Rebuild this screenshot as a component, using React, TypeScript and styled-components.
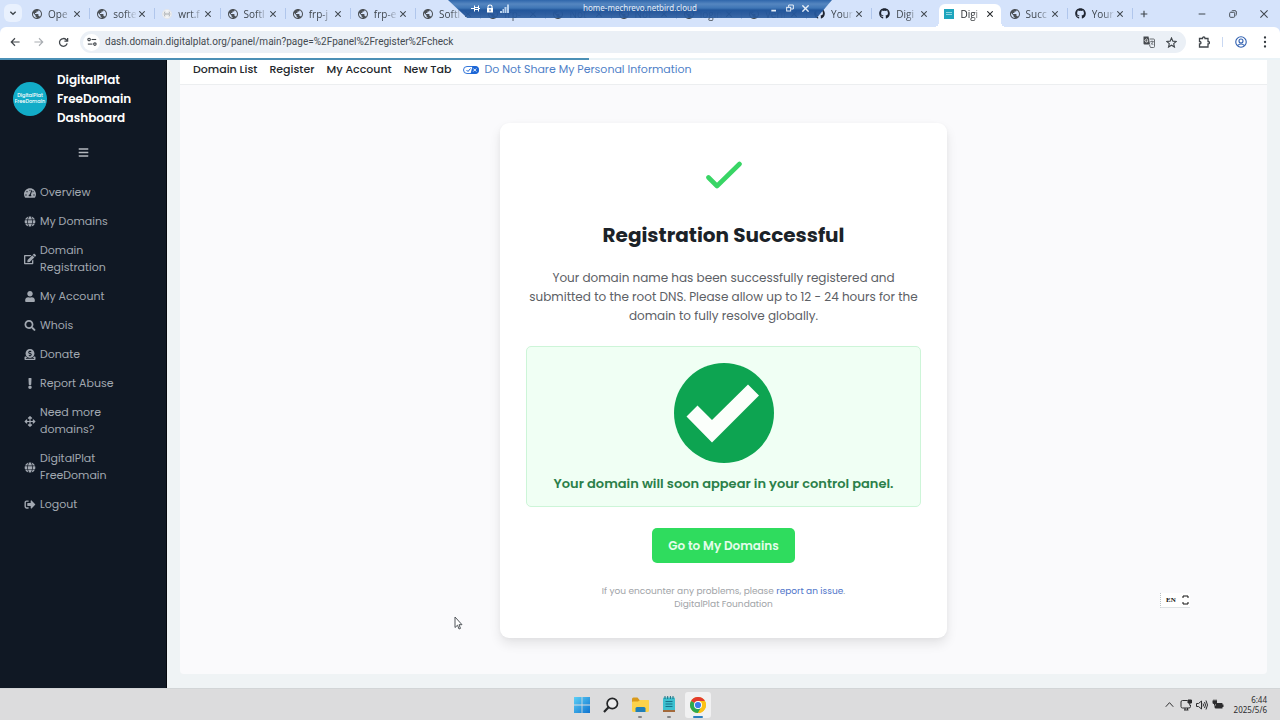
import React from "react";
import styled, { createGlobalStyle, css } from "styled-components";
import {
  FaArrowsAlt,
  FaBars,
  FaDonate,
  FaEdit,
  FaExclamation,
  FaGithub,
  FaGlobe,
  FaSearch,
  FaSignOutAlt,
  FaTachometerAlt,
  FaUser,
} from "react-icons/fa";

const uiFont = `"Poppins", "Inter", sans-serif`;
const chromeFont = `"Segoe UI", "Open Sans", "Noto Sans", sans-serif`;

const GlobalStyle = createGlobalStyle`
  *, *::before, *::after { box-sizing: border-box; }
  body { margin: 0; font-family: ${uiFont}; background: #eff3f5; }
  h1, p, ul { margin: 0; padding: 0; }
  button { border: 0; padding: 0; background: none; font: inherit; color: inherit; }
  a { text-decoration: none; color: inherit; }
  svg { display: block; flex: none; }
`;

const Screen = styled.div`
  position: relative;
  display: flex;
  flex-direction: column;
  min-height: 100vh;
  overflow: hidden;
`;

/* ---------- Browser tabs ---------- */

const TabStrip = styled.div`
  display: flex;
  align-items: stretch;
  height: 27px;
  background: #d5e3fb;
  font-family: ${chromeFont};
  color: #3f464d;
`;

const TabSearch = styled.button`
  display: grid;
  place-items: center;
  width: 18px;
  height: 18px;
  margin: 4px 3px 0 4px;
  border-radius: 6px;
  background: #e9f1fe;
`;

const Tabs = styled.div`
  display: flex;
  flex: 1;
  min-width: 0;
`;

const Tab = styled.div<{ $active?: boolean; $divider?: boolean }>`
  position: relative;
  display: flex;
  align-items: center;
  flex: 1 1 0;
  min-width: 0;
  padding: 0 7px;
  ${(p) =>
    p.$divider &&
    css`
      background: linear-gradient(#b0c6ec, #b0c6ec) right 8px / 1px 11px no-repeat;
    `}
  ${(p) =>
    p.$active &&
    css`
      margin: 4px 2px 0;
      padding: 0 5px 4px;
      border-radius: 6px 6px 0 0;
      background: #fff;
      color: #1f2327;
      &::before,
      &::after {
        content: "";
        position: absolute;
        bottom: 0;
        width: 5px;
        height: 5px;
      }
      &::before {
        left: -5px;
        background: radial-gradient(circle at 0 0, transparent 5px, #fff 5px);
      }
      &::after {
        right: -5px;
        background: radial-gradient(circle at 100% 0, transparent 5px, #fff 5px);
      }
    `}
`;

const TabLabel = styled.span`
  flex: 1;
  min-width: 0;
  margin-left: 6px;
  white-space: nowrap;
  font-size: 10px;
  line-height: 14px;
  mask-image: linear-gradient(90deg, #000 50%, transparent 105%);
`;

const TabClose = styled.button`
  display: grid;
  place-items: center;
  width: 12px;
  height: 12px;
`;

const SiteBadge = styled.span`
  display: grid;
  align-content: center;
  gap: 1px;
  width: 10px;
  height: 10px;
  padding: 0 2px;
  background: #1fa5bd;
  &::before,
  &::after {
    content: "";
    height: 1px;
    background: #8fd6e2;
  }
`;

const StripControls = styled.div`
  display: flex;
  align-items: center;
  justify-content: space-between;
  width: 147px;
  padding: 0 10px 0 5px;
`;

const WindowButtons = styled.div`
  display: flex;
  gap: 19px;
`;

const IconButton = styled.button`
  display: grid;
  place-items: center;
  width: 12px;
  height: 14px;
`;

/* ---------- Browser toolbar ---------- */

const ToolbarBack = styled.div`
  background: #d5e3fb;
`;

const Toolbar = styled.div`
  display: flex;
  align-items: center;
  height: 31px;
  padding: 0 9px 1px;
  border-radius: 6px 6px 0 0;
  background: #fff;
  color: #41464b;
`;

const NavButtons = styled.div`
  display: flex;
  gap: 12px;
  margin-right: 11px;
`;

const AddressBar = styled.div`
  display: flex;
  align-items: center;
  flex: 1;
  height: 22px;
  padding: 0 9px 0 3px;
  border-radius: 11px;
  background: #ebf0f6;
`;

const SiteInfo = styled.button`
  display: grid;
  place-items: center;
  width: 17px;
  height: 17px;
  border-radius: 50%;
  background: #fff;
`;

const AddressInput = styled.input`
  flex: 1;
  min-width: 0;
  padding: 0;
  margin: 0 5px;
  border: 0;
  outline: 0;
  background: none;
  font: 10px/16px "Segoe UI", Roboto, sans-serif;
  color: #444a50;
`;

const AddressIcons = styled.div`
  display: flex;
  gap: 10px;
`;

const ToolbarEnd = styled.div`
  display: flex;
  align-items: center;
  gap: 12px;
  margin-left: 12px;
`;

const Divider = styled.span`
  width: 1px;
  height: 10px;
  background: #c9d8f2;
`;

const LoadTrack = styled.div`
  height: 2px;
  background: #eaf3f7;
`;

const LoadBar = styled.div`
  width: 46%;
  height: 2px;
  background: #4b90b6;
`;

/* ---------- Remote session bar ---------- */

const RemoteBar = styled.div`
  position: absolute;
  top: 0;
  left: 50%;
  display: flex;
  align-items: flex-start;
  justify-content: space-between;
  width: 384px;
  height: 18px;
  padding: 2px 23px 0;
  transform: translateX(-50%);
  clip-path: polygon(0 0, 100% 0, 96% 100%, 5% 100%);
  background: linear-gradient(#2f66ab 0, #5586c0 4px, #3f76b6 8px, #23579c 10px, #24559af0 14px, #2a5c9fe6 18px);
  font: 8px/12px "Noto Sans", sans-serif;
  color: #e6eef8;
`;

const RemoteIcons = styled.div<{ $gap: number; $end?: boolean }>`
  display: flex;
  align-items: center;
  justify-content: ${(p) => (p.$end ? "flex-end" : "flex-start")};
  gap: ${(p) => p.$gap}px;
  width: 56px;
  height: 12px;
`;

/* ---------- Dashboard ---------- */

const Dashboard = styled.div`
  display: flex;
  flex: 1;
  background: #eff3f5;
`;

const Sidebar = styled.aside`
  width: 167px;
  flex: none;
  background: #101824;
  border-right: 1px solid #05080e;
`;

const Brand = styled.a`
  display: flex;
  align-items: center;
  gap: 10px;
  padding: 10px 13px 0;
  font-size: 12px;
  line-height: 19px;
  font-weight: 600;
  color: #fff;
`;

const BrandMark = styled.span`
  display: grid;
  align-content: center;
  flex: none;
  width: 34px;
  height: 34px;
  border-radius: 50%;
  background: #12acc8;
  text-align: center;
  font-size: 5px;
  line-height: 6px;
  font-weight: 500;
`;

const MenuToggle = styled.button`
  display: block;
  margin: 20px auto 0;
  color: #b4b8be;
`;

const SideList = styled.ul`
  display: grid;
  gap: 12px;
  margin-top: 26px;
  list-style: none;
`;

const SideLink = styled.a`
  display: flex;
  align-items: center;
  gap: 4px;
  padding-left: 24px;
  font-size: 11px;
  line-height: 17px;
  color: #a2a8b1;
  svg {
    width: 12px;
  }
`;

const Content = styled.main`
  display: flex;
  flex: 1;
  min-width: 0;
  padding: 0 13px 14px;
`;

const Panel = styled.div`
  display: flex;
  flex: 1;
  flex-direction: column;
  border-radius: 0 0 4px 4px;
  background: #fafafc;
`;

const TopNav = styled.nav`
  display: flex;
  gap: 12px;
  height: 25px;
  padding: 0 13px;
  border-bottom: 1px solid #eceef0;
  background: #fff;
  font-size: 11px;
  line-height: 19px;
  font-weight: 500;
  color: #23272b;
`;

const PrivacyLink = styled.a`
  display: flex;
  align-items: center;
  gap: 5px;
  height: 19px;
  font-weight: 400;
  color: #4f7fc8;
`;

const Card = styled.section`
  width: 447px;
  margin: 38px auto 0;
  padding: 38px 26px 27px;
  border-radius: 9px;
  background: #fff;
  box-shadow: 0 6px 12px rgba(0, 0, 0, 0.09), 0 1px 4px rgba(0, 0, 0, 0.03);
  text-align: center;
  svg {
    margin: 0 auto;
  }
`;

const Title = styled.h1`
  margin: 30px 0 18px;
  font-size: 20px;
  line-height: 30px;
  font-weight: 700;
  color: #1b2228;
`;

const Message = styled.p`
  font-size: 12px;
  line-height: 19px;
  white-space: nowrap;
  color: #5c6065;
`;

const Notice = styled.div`
  margin: 21px 0;
  padding: 16px 0 12px;
  border: 1px solid #cdf5d8;
  border-radius: 5px;
  background: #f0fff4;
`;

const NoticeText = styled.p`
  margin-top: 11px;
  font-size: 13px;
  line-height: 20px;
  font-weight: 600;
  white-space: nowrap;
  color: #2b8049;
`;

const PrimaryButton = styled.button`
  height: 35px;
  padding: 0 16px;
  border-radius: 5px;
  background: #2fdc5e;
  font-size: 12px;
  font-weight: 600;
  color: #e4fdeb;
`;

const Help = styled.p`
  margin-top: 22px;
  font-size: 9px;
  line-height: 13px;
  color: #a1a4a8;
  a {
    color: #4e74c9;
  }
`;

/* ---------- Desktop overlays and taskbar ---------- */

const Cursor = styled.svg`
  position: absolute;
  left: 454px;
  top: 616px;
`;

const InputBadge = styled.div`
  position: absolute;
  right: 90px;
  bottom: 112px;
  display: flex;
  align-items: center;
  justify-content: space-between;
  width: 30px;
  height: 15px;
  padding: 0 1px 0 5px;
  border-left: 1px dotted #b9c0c4;
  border-bottom: 1px solid #dfe3e5;
  background: #fff;
  font: 700 7px/12px "Liberation Serif", serif;
  color: #111;
`;

const Taskbar = styled.footer`
  display: grid;
  grid-template-columns: 1fr auto 1fr;
  align-items: center;
  height: 32px;
  padding: 0 13px;
  border-top: 1px solid #d2d5d7;
  background: #dcdcdd;
`;

const Apps = styled.div`
  display: flex;
  grid-column: 2;
  gap: 3px;
`;

const AppButton = styled.button<{ $state?: "open" | "active" }>`
  position: relative;
  display: grid;
  place-items: center;
  width: 26px;
  height: 26px;
  border-radius: 3px;
  background: ${(p) => (p.$state === "active" ? "#f1f1f2" : "none")};
  &::after {
    content: "";
    position: absolute;
    bottom: 0;
    left: 50%;
    width: ${(p) => (p.$state === "active" ? 10 : 4)}px;
    height: 2px;
    border-radius: 1px;
    transform: translateX(-50%);
    background: ${(p) => (p.$state === "active" ? "#2b7fc0" : p.$state ? "#858688" : "none")};
  }
`;

const Tray = styled.div`
  display: flex;
  align-items: center;
  justify-self: end;
  grid-column: 3;
  gap: 4px;
  color: #2c2c2e;
`;

const Clock = styled.time`
  margin-left: 6px;
  text-align: right;
  font: 8px/10px "Noto Sans", sans-serif;
`;

/* ---------- Drawings ---------- */

type LineProps = { size?: number; children: React.ReactNode; box?: string; width?: number; sw?: number };

const Line = ({ size = 12, width, box = "0 0 24 24", sw = 2, children }: LineProps) => (
  <svg
    width={width ?? size}
    height={size}
    viewBox={box}
    fill="none"
    stroke="currentColor"
    strokeWidth={sw}
    aria-hidden
  >
    {children}
  </svg>
);

const CloseGlyph = ({ size = 6, sw = 3.4 }: { size?: number; sw?: number }) => (
  <Line size={size} box="2 2 20 20" sw={sw}>
    <path d="M3 3l18 18M21 3L3 21" />
  </Line>
);

const WorldGlyph = () => (
  <svg width="10" height="10" viewBox="2 2 20 20" fill="#4c5156" aria-hidden>
    <path d="M12 2C6.480 2 2 6.480 2 12s4.480 10 10 10 10-4.480 10-10S17.520 2 12 2zm-1 17.930c-3.950-.490-7-3.850-7-7.930 0-.620.080-1.210.210-1.790L9 15v1c0 1.100.900 2 2 2v1.930zm6.900-2.540c-.260-.810-1-1.390-1.900-1.390h-1v-3c0-.550-.450-1-1-1H8v-2h2c.550 0 1-.450 1-1V7h2c1.100 0 2-.900 2-2v-.410c2.930 1.190 5 4.060 5 7.410 0 2.080-.800 3.970-2.100 5.390z" />
  </svg>
);

const SignalGlyph = () => (
  <Line size={10} sw={2}>
    <circle cx="12" cy="12" r="11" fill="#f2f3f4" stroke="#e3e5e8" />
    <g stroke="#a5a9ae">
      <path d="M7 6q-4 6 0 12M17 6q4 6 0 12M9.500 9q-1.500 3 0 6M14.500 9q1.500 3 0 6" />
      <path d="M10 12h4" />
    </g>
  </Line>
);

const RestoreGlyph = ({ size = 8 }: { size?: number }) => (
  <Line size={size} sw={2.8}>
    <rect x="2" y="7" width="15" height="15" rx="3" />
    <path d="M7 4q1-2 4-2h7q4 0 4 4v7q0 3-2 4" />
  </Line>
);

const faviconFor = (kind: string) => {
  if (kind === "github") return <FaGithub size={11} color="#1e2430" />;
  if (kind === "signal") return <SignalGlyph />;
  if (kind === "plat") return <SiteBadge />;
  return <WorldGlyph />;
};

const tabs: { label: string; kind: string; active?: boolean }[] = [
  { label: "Ope", kind: "world" },
  { label: "softe", kind: "world" },
  { label: "wrt.f", kind: "signal" },
  { label: "Softl", kind: "world" },
  { label: "frp-j", kind: "world" },
  { label: "frp-e", kind: "world" },
  { label: "Softl", kind: "world" },
  { label: "frp-", kind: "world" },
  { label: "Not", kind: "world" },
  { label: "Not", kind: "world" },
  { label: "login", kind: "world" },
  { label: "Verif", kind: "world" },
  { label: "Your", kind: "github" },
  { label: "Digi", kind: "github" },
  { label: "Digi", kind: "plat", active: true },
  { label: "Succ", kind: "world" },
  { label: "Your", kind: "github" },
];

const sideItems: { icon: React.ReactNode; label: React.ReactNode; key: string }[] = [
  { key: "overview", icon: <FaTachometerAlt size={12} />, label: "Overview" },
  { key: "domains", icon: <FaGlobe size={11} />, label: "My Domains" },
  { key: "register", icon: <FaEdit size={12} />, label: <>Domain<br />Registration</> },
  { key: "account", icon: <FaUser size={11} />, label: "My Account" },
  { key: "whois", icon: <FaSearch size={11} />, label: "Whois" },
  { key: "donate", icon: <FaDonate size={11} />, label: "Donate" },
  { key: "abuse", icon: <FaExclamation size={11} />, label: "Report Abuse" },
  { key: "more", icon: <FaArrowsAlt size={11} />, label: <>Need more<br />domains?</> },
  { key: "free", icon: <FaGlobe size={11} />, label: <>DigitalPlat<br />FreeDomain</> },
  { key: "logout", icon: <FaSignOutAlt size={11} />, label: "Logout" },
];

const BrowserTabs = () => (
  <TabStrip>
    <TabSearch aria-label="Search tabs">
      <Line size={8} sw={4}><path d="M4 8l8 8 8-8" /></Line>
    </TabSearch>
    <Tabs>
      {tabs.map((t, i) => (
        <Tab key={i} $active={t.active} $divider={!t.active && !tabs[i + 1]?.active}>
          {faviconFor(t.kind)}
          <TabLabel>{t.label}</TabLabel>
          <TabClose aria-label="Close tab"><CloseGlyph /></TabClose>
        </Tab>
      ))}
    </Tabs>
    <StripControls>
      <IconButton aria-label="New tab">
        <Line size={8} sw={3.4}><path d="M12 2v20M2 12h20" /></Line>
      </IconButton>
      <WindowButtons>
        <IconButton aria-label="Minimize"><Line size={8} sw={3}><path d="M2 12h20" /></Line></IconButton>
        <IconButton aria-label="Restore"><RestoreGlyph /></IconButton>
        <IconButton aria-label="Close"><CloseGlyph size={8} sw={2.6} /></IconButton>
      </WindowButtons>
    </StripControls>
  </TabStrip>
);

const BrowserToolbar = () => (
  <ToolbarBack>
    <Toolbar>
      <NavButtons>
        <IconButton aria-label="Back">
          <Line size={10} sw={2.8}><path d="M23 12H3M12 3l-9 9 9 9" /></Line>
        </IconButton>
        <IconButton aria-label="Forward">
          <svg width="10" height="10" viewBox="0 0 24 24" fill="none" stroke="#a9adb2" strokeWidth="2.6">
            <path d="M1 12h20M12 3l9 9-9 9" />
          </svg>
        </IconButton>
        <IconButton aria-label="Reload">
          <Line size={11} sw={2.8}>
            <path d="M20 14a8.500 8.500 0 1 1-2-8l2 2.500" />
            <path d="M21 2v7h-7" />
          </Line>
        </IconButton>
      </NavButtons>
      <AddressBar>
        <SiteInfo aria-label="Site information">
          <Line size={10} sw={2.6}>
            <circle cx="5" cy="6" r="3" /><path d="M11 6h11" />
            <circle cx="19" cy="17" r="3" /><path d="M2 17h11" />
          </Line>
        </SiteInfo>
        <AddressInput
          aria-label="Address"
          defaultValue="dash.domain.digitalplat.org/panel/main?page=%2Fpanel%2Fregister%2Fcheck"
        />
        <AddressIcons>
          <IconButton aria-label="Translate">
            <svg width="12" height="12" viewBox="0 0 24 24">
              <path d="M1 1h10l3 16H3q-2 0-2-2z" fill="#45494e" />
              <path d="M9.500 7.500A3 3 0 1 0 10 9.500H7.500" fill="none" stroke="#fff" strokeWidth="1.500" />
              <path d="M13 6h8q2 0 2 2v13q0 2-2 2h-6l-2-5" fill="none" stroke="#5a5e63" strokeWidth="1.800" />
              <path d="M14.500 11h7M18 9v2M20.500 11q-1 4-5 6M16 13l4.500 5" fill="none" stroke="#5a5e63" strokeWidth="1.500" />
            </svg>
          </IconButton>
          <IconButton aria-label="Bookmark">
            <Line size={11} sw={2.4}>
              <path d="M12 2l3 7 7.500.600-5.700 5 1.700 7.400L12 18l-6.500 4 1.700-7.400-5.700-5L9 9z" />
            </Line>
          </IconButton>
        </AddressIcons>
      </AddressBar>
      <ToolbarEnd>
        <IconButton aria-label="Extensions">
          <Line size={12} sw={2.6}>
            <path d="M3 5h6q0-3 2.500-3T14 5h6v6q3 0 3 2.500T20 16v6H3v-6q3 0 3-2.500T3 11z" />
          </Line>
        </IconButton>
        <Divider />
        <IconButton aria-label="Profile">
          <svg width="12" height="12" viewBox="0 0 24 24" fill="none" stroke="#2f5fb0" strokeWidth="2.200">
            <circle cx="12" cy="12" r="10.500" />
            <circle cx="12" cy="10" r="4" />
            <path d="M5 19q7-6 14 0" />
          </svg>
        </IconButton>
        <IconButton aria-label="Menu">
          <svg width="12" height="12" viewBox="0 0 24 24" fill="#33383d">
            <circle cx="12" cy="3" r="2.300" /><circle cx="12" cy="12" r="2.300" /><circle cx="12" cy="21" r="2.300" />
          </svg>
        </IconButton>
      </ToolbarEnd>
    </Toolbar>
    <LoadTrack><LoadBar /></LoadTrack>
  </ToolbarBack>
);

const RemoteSession = () => (
  <RemoteBar>
    <RemoteIcons $gap={6}>
      <svg width="9" height="9" viewBox="0 0 18 18" fill="none" stroke="#fff" strokeWidth="2" aria-hidden>
        <path d="M0 9h6M7 3v12M7 7h8M7 11h8M15 3v12M15 9h3" />
      </svg>
      <svg width="8" height="9" viewBox="0 0 16 18">
        <path d="M4 8V5q0-3 4-3t4 3v3" fill="none" stroke="#fff" strokeWidth="2.200" />
        <path d="M2 8h12v9H2zM7 10.500v4h2v-4z" fill="#fff" fillRule="evenodd" />
      </svg>
      <svg width="9" height="9" viewBox="0 0 18 18" fill="#b9d2ee">
        <path d="M0 14h4v4H0zM5 10h3v8H5zM9 6h4v12H9zM14 1h4v17h-4z" />
      </svg>
    </RemoteIcons>
    <span>home-mechrevo.netbird.cloud</span>
    <RemoteIcons $gap={8} $end>
      <Line size={8} sw={5}><path d="M4 20h14" /></Line>
      <Line size={8} sw={3}><rect x="2" y="10" width="12" height="11" /><path d="M8 9V3h14v12h-7" /></Line>
      <CloseGlyph size={7} sw={4} />
    </RemoteIcons>
  </RemoteBar>
);

const SuccessCard = () => (
  <Card>
    <svg width="38" height="29" viewBox="0 0 38 29" fill="none" aria-hidden>
      <path
        d="M3.500 16.500L12 25 34.500 3"
        stroke="#38d565"
        strokeWidth="4.600"
        strokeLinecap="round"
        strokeLinejoin="round"
      />
    </svg>
    <Title>Registration Successful</Title>
    <Message>
      Your domain name has been successfully registered and
      <br />
      submitted to the root DNS. Please allow up to 12 - 24 hours for the
      <br />
      domain to fully resolve globally.
    </Message>
    <Notice>
      <svg width="100" height="100" viewBox="0 0 100 100" aria-hidden>
        <circle cx="50" cy="50" r="50" fill="#0da451" />
        <path d="M12.500 53.500L23.500 42.500 38 57 74 21.500 85 32.500 38 79.500z" fill="#fbfffb" />
      </svg>
      <NoticeText>Your domain will soon appear in your control panel.</NoticeText>
    </Notice>
    <PrimaryButton>Go to My Domains</PrimaryButton>
    <Help>
      If you encounter any problems, please <a href="#report">report an issue</a>.
      <br />
      DigitalPlat Foundation
    </Help>
  </Card>
);

const DesktopTaskbar = () => (
  <Taskbar>
    <Apps>
      <AppButton aria-label="Start">
        <svg width="16" height="16" viewBox="0 0 16 16">
          <defs>
            <linearGradient id="win" x1="0" y1="0" x2="1" y2="1">
              <stop offset="0" stopColor="#5cd0f6" />
              <stop offset="1" stopColor="#0f73cf" />
            </linearGradient>
          </defs>
          <path d="M0 0h7.600v7.600H0zM8.400 0H16v7.600H8.400zM0 8.400h7.600V16H0zM8.400 8.400H16V16H8.400z" fill="url(#win)" />
        </svg>
      </AppButton>
      <AppButton aria-label="Search">
        <svg width="16" height="16" viewBox="0 0 16 16" fill="none" stroke="#242628" strokeWidth="1.700">
          <circle cx="9.300" cy="6.500" r="5.200" fill="#ececed" />
          <path d="M5.500 10.300L1 15" strokeWidth="2.200" />
        </svg>
      </AppButton>
      <AppButton aria-label="File Explorer" $state="open">
        <svg width="17" height="16" viewBox="0 0 17 16">
          <path d="M0 2q0-1.500 1.500-1.500h4L7.500 3H15q2 0 2 2v3H0z" fill="#d99a1c" />
          <path d="M0 5q0-.5 1-.5h5L8 3h8q1 0 1 1v9.500q0 1.500-1.500 1.500h-14Q0 15 0 13.500z" fill="#fbd24c" />
          <path d="M3.500 15v-3.500q0-1.500 1.500-1.500h7q1.500 0 1.500 1.500V15z" fill="#1f7fb8" />
        </svg>
      </AppButton>
      <AppButton aria-label="Notepad" $state="open">
        <svg width="14" height="17" viewBox="0 0 14 17">
          <rect x="1" y="1.500" width="12" height="14" rx="1" fill="#3cc0cf" />
          <path d="M1 14h12v2H1z" fill="#a36a3c" />
          <path d="M3 0v3M5.700 0v3M8.400 0v3M11 0v3" stroke="#1b6f80" strokeWidth="1" />
          <path d="M3.500 5.500h7M3.500 8h7M3.500 10.500h7" stroke="#14728a" strokeWidth="1.200" />
        </svg>
      </AppButton>
      <AppButton aria-label="Chrome" $state="active">
        <svg width="16" height="16" viewBox="0 0 16 16">
          <circle cx="8" cy="8" r="8" fill="#fbc116" />
          <path d="M8 8L1.070 4A8 8 0 0 1 14.930 4H8z" fill="#e33b2e" />
          <path d="M8 8L1.070 4A8 8 0 0 0 8 16L11.460 10z" fill="#2da94f" />
          <path d="M8 4h6.930A8 8 0 0 1 8 16l3.460-6z" fill="#fbc116" />
          <circle cx="8" cy="8" r="4" fill="#fff" />
          <circle cx="8" cy="8" r="3.100" fill="#3f7be8" />
        </svg>
      </AppButton>
    </Apps>
    <Tray>
      <IconButton aria-label="Show hidden icons">
        <Line size={9} sw={2.6}><path d="M2 18L12 7l10 11" /></Line>
      </IconButton>
      <IconButton aria-label="Network">
        <svg width="12" height="12" viewBox="0 0 24 24" fill="none" stroke="currentColor" strokeWidth="2">
          <path d="M15 3H5Q2 3 2 6v9q0 3 3 3h13q3 0 3-3v-3M8 22h9M10 18v4M15 18v4" />
          <path d="M16 2h7v6h-7zM19.500 8v5" fill="currentColor" />
        </svg>
      </IconButton>
      <IconButton aria-label="Volume">
        <svg width="12" height="12" viewBox="0 0 24 24" fill="none" stroke="currentColor" strokeWidth="2">
          <path d="M1 9h4l6-5v16l-6-5H1zM14 9q2 3 0 6M17 6q4 6 0 12M20 3q6 9 0 18" />
        </svg>
      </IconButton>
      <IconButton aria-label="Battery">
        <svg width="12" height="12" viewBox="0 0 24 24" fill="currentColor">
          <path d="M8 8h12q1 0 1 1v2h2v5h-2v2q0 1-1 1H8q-3 0-3-3v-3h3z" />
          <path d="M1 3h2V1h2v2h2V1h2v2h1v4q0 3-3 3v3H4v-3Q1 10 1 7z" />
        </svg>
      </IconButton>
      <Clock dateTime="2025-05-06T06:44">6:44<br />2025/5/6</Clock>
    </Tray>
  </Taskbar>
);

export default function App() {
  return (
    <Screen>
      <GlobalStyle />
      <BrowserTabs />
      <BrowserToolbar />
      <RemoteSession />
      <Dashboard>
        <Sidebar>
          <Brand href="#home">
            <BrandMark>DigitalPlat<br />FreeDomain</BrandMark>
            <span>DigitalPlat<br />FreeDomain<br />Dashboard</span>
          </Brand>
          <MenuToggle aria-label="Toggle menu"><FaBars size={11} /></MenuToggle>
          <SideList>
            {sideItems.map((item) => (
              <li key={item.key}>
                <SideLink href={`#${item.key}`}>
                  {item.icon}
                  <span>{item.label}</span>
                </SideLink>
              </li>
            ))}
          </SideList>
        </Sidebar>
        <Content>
          <Panel>
            <TopNav>
              <a href="#list">Domain List</a>
              <a href="#register">Register</a>
              <a href="#account">My Account</a>
              <a href="#new">New Tab</a>
              <PrivacyLink href="#privacy">
                <svg width="16" height="8" viewBox="0 0 32 16" aria-hidden>
                  <rect x="1" y="1" width="30" height="14" rx="7" fill="#fff" stroke="#1c66d6" strokeWidth="1.800" />
                  <path d="M19 0h5a8 8 0 0 1 0 16h-9z" fill="#1c66d6" />
                  <path d="M7 8l3 3 5-6" fill="none" stroke="#1c66d6" strokeWidth="2" />
                  <path d="M20.500 5l6 6M26.500 5l-6 6" stroke="#fff" strokeWidth="2" />
                </svg>
                Do Not Share My Personal Information
              </PrivacyLink>
            </TopNav>
            <SuccessCard />
          </Panel>
        </Content>
      </Dashboard>
      <DesktopTaskbar />
      <InputBadge>
        EN
        <Line size={10} width={7} box="0 0 14 20" sw={2}>
          <path d="M2 6V2h10v4M2 14v4h10v-4" />
        </Line>
      </InputBadge>
      <Cursor width="9" height="14" viewBox="0 0 9 14" fill="#fff" stroke="#50555a" strokeWidth="1" aria-hidden>
        <path d="M1 1v10.500L3.500 9.200 5 13l1.500-.6L5 8.700h3z" />
      </Cursor>
    </Screen>
  );
}
